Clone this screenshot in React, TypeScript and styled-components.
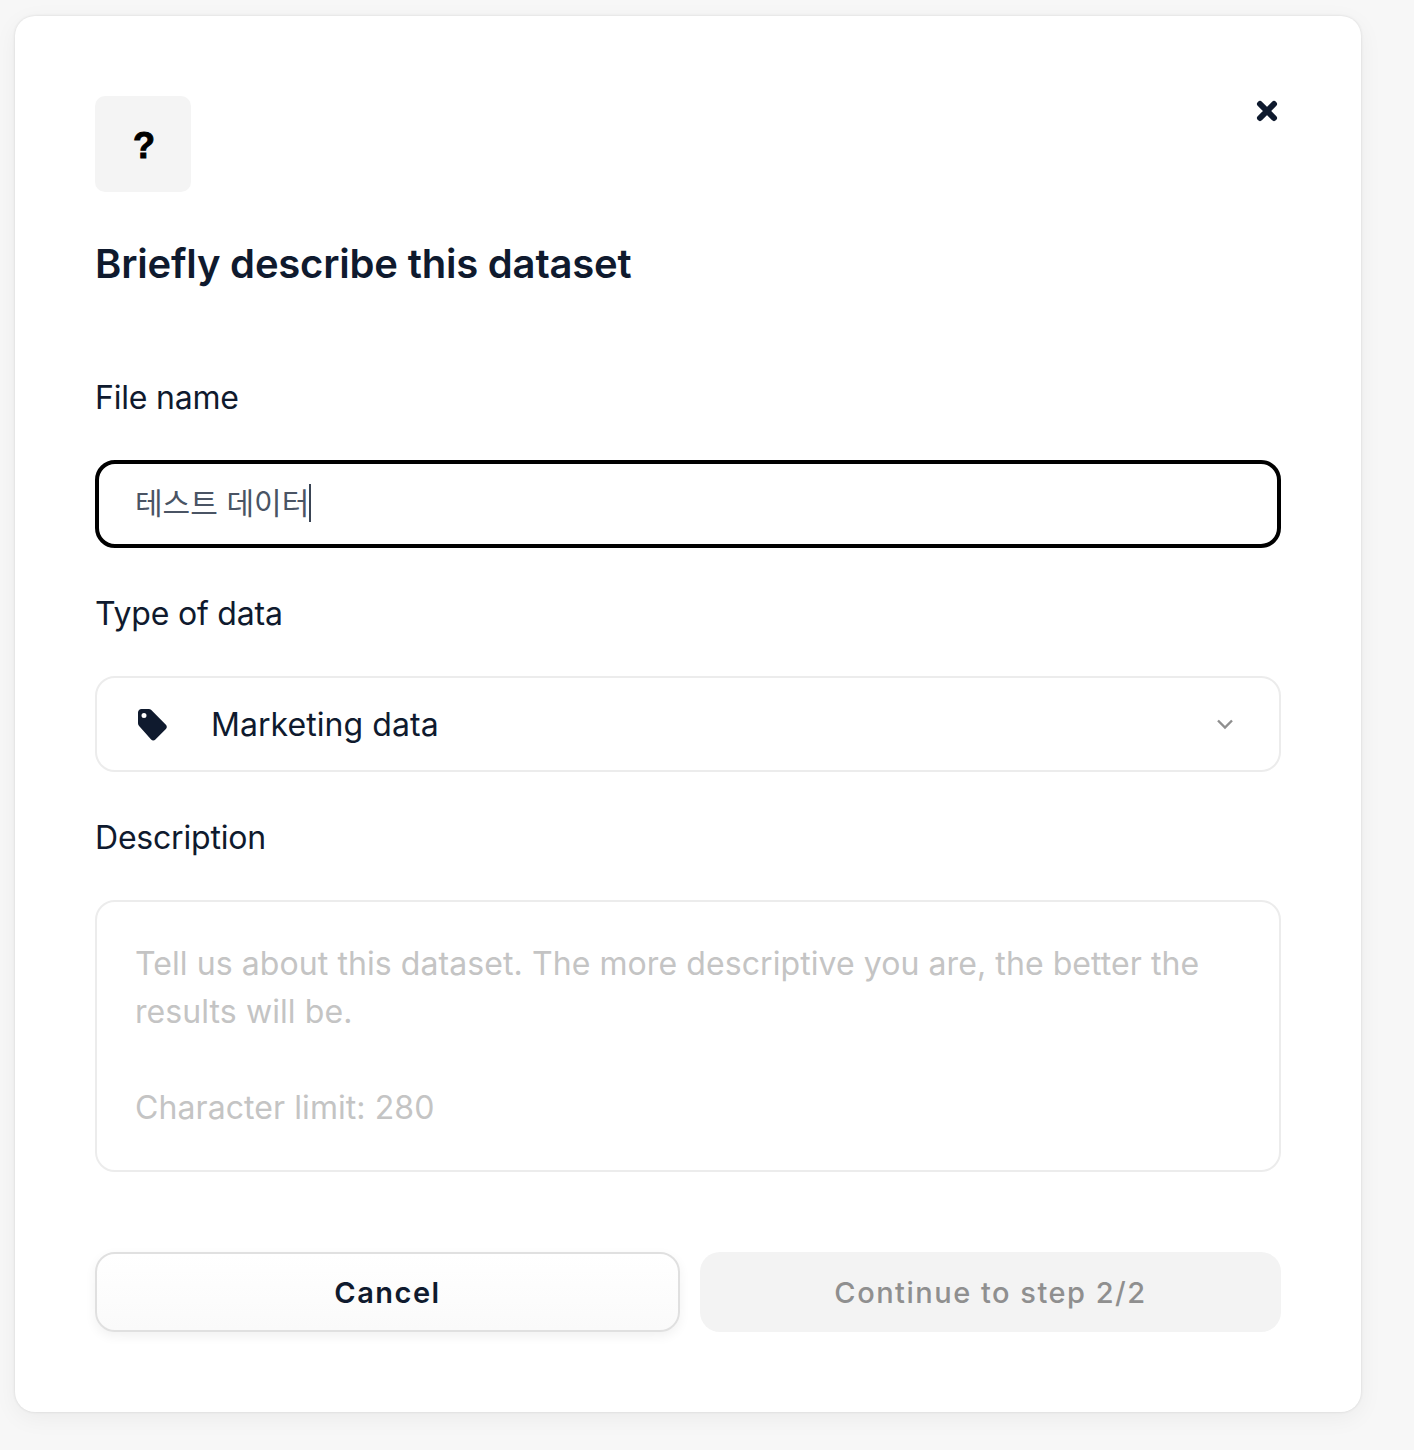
import styled, { createGlobalStyle } from 'styled-components';

const GlobalStyle = createGlobalStyle`
  html, body {
    margin: 0;
    padding: 0;
    background: #f7f7f7;
  }
  * {
    box-sizing: border-box;
  }
`;

const App = () => {
  return (
    <>
      <GlobalStyle />
      <Page>
        <Card>
          <Header>
            <IconBox>
              <QuestionGlyph>?</QuestionGlyph>
            </IconBox>
            <CloseButton aria-label="Close">
              <svg width="22" height="22" viewBox="0 0 22 22" fill="none">
                <path d="M4 4L18 18M18 4L4 18" stroke="#0f1a2e" strokeWidth="6" strokeLinecap="round" />
              </svg>
            </CloseButton>
          </Header>

          <Title>Briefly describe this dataset</Title>

          <FileLabel>File name</FileLabel>
          <NameInput>
            <NameValue>테스트 데이터</NameValue>
            <Caret />
          </NameInput>

          <TypeLabel>Type of data</TypeLabel>
          <SelectBox>
            <TagIcon width="34" height="34" viewBox="0 0 34 34">
              <path
                fillRule="evenodd"
                d="M3 5.5C3 3.6 4.6 2 6.5 2h7.2c1 0 1.9.4 2.6 1.1l14.6 14.6c1.2 1.2 1.2 3.100 0 4.300L20.400 32.500c-1.200 1.200-3.100 1.200-4.300 0L4.100 18.900C3.400 18.200 3 17.300 3 16.300V5.500zM9 6a2.500 2.500 0 1 0 0 5 2.500 2.500 0 0 0 0-5z"
                fill="#0f1a2e"
              />
            </TagIcon>
            <SelectValue>Marketing data</SelectValue>
            <Chevron width="18" height="12" viewBox="0 0 18 12" fill="none">
              <path d="M2 2.500L9 9.500L16 2.500" stroke="#8f8f8f" strokeWidth="2.400" />
            </Chevron>
          </SelectBox>

          <DescriptionLabel>Description</DescriptionLabel>
          <DescriptionBox>
            <Placeholder>Tell us about this dataset. The more descriptive you are, the better the results will be.</Placeholder>
            <Placeholder $gap>Character limit: 280</Placeholder>
          </DescriptionBox>

          <Actions>
            <CancelButton>Cancel</CancelButton>
            <ContinueButton disabled>Continue to step 2/2</ContinueButton>
          </Actions>
        </Card>
      </Page>
    </>
  );
};

export default App;

const Page = styled.div`
  width: 1414px;
  height: 1450px;
  padding: 16px 0 0 15px;
  overflow: hidden;
  background: #f7f7f7;
`;

const Card = styled.div`
  display: flex;
  flex-direction: column;
  width: 1346px;
  height: 1396px;
  padding: 80px;
  background: #fff;
  border-radius: 20px;
  box-shadow: 0 0 3px rgba(0, 0, 0, 0.12), 0 6px 24px rgba(0, 0, 0, 0.05);
  font-family: Inter, "Noto Sans CJK KR", sans-serif;
  color: #0f1a2e;
`;

const Header = styled.div`
  display: flex;
  justify-content: space-between;
  align-items: flex-start;
`;

const IconBox = styled.div`
  display: flex;
  align-items: center;
  justify-content: center;
  width: 96px;
  height: 96px;
  padding: 3px 0 0 2px;
  background: #f4f4f4;
  border-radius: 10px;
`;

const QuestionGlyph = styled.span`
  font-family: "Liberation Sans", sans-serif;
  font-size: 36px;
  font-weight: 900;
  line-height: 1;
  color: #000;
  -webkit-text-stroke: 1px #000;
`;

const CloseButton = styled.button`
  display: flex;
  padding: 0;
  margin: 4px 3px 0 0;
  border: none;
  background: none;
`;

const Title = styled.h1`
  margin: 48px 0 0;
  font-family: Inter, sans-serif;
  font-size: 40px;
  font-weight: 600;
  line-height: 48px;
  letter-spacing: -0.2px;
  color: #0f1a2e;
`;

const FieldLabel = styled.label`
  display: block;
  font-family: Inter, sans-serif;
  font-size: 32px;
  line-height: 40px;
  letter-spacing: -0.2px;
  color: #0f1a2e;
`;

const FileLabel = styled(FieldLabel)`
  margin-top: 90px;
`;

const TypeLabel = styled(FieldLabel)`
  margin-top: 46px;
`;

const DescriptionLabel = styled(FieldLabel)`
  margin-top: 46px;
`;

const NameInput = styled.div`
  display: flex;
  align-items: center;
  height: 88px;
  margin-top: 42px;
  padding: 0 36px 3px;
  border: 4px solid #000;
  border-radius: 20px;
`;

const NameValue = styled.span`
  margin-bottom: 4px;
  font-family: "Noto Sans CJK KR", sans-serif;
  font-size: 30px;
  font-weight: 400;
  word-spacing: 2px;
  color: #4a5464;
`;

const Caret = styled.span`
  width: 2px;
  height: 38px;
  background: #3a4454;
`;

const SelectBox = styled.div`
  display: flex;
  align-items: center;
  height: 96px;
  margin-top: 42px;
  padding: 0 45px 0 38px;
  border: 2px solid #ececec;
  border-radius: 20px;
`;

const TagIcon = styled.svg`
  flex: none;
`;

const SelectValue = styled.span`
  flex: 1;
  margin-left: 42px;
  font-size: 32px;
  letter-spacing: 0.06px;
  color: #0f1a2e;
`;

const Chevron = styled.svg`
  flex: none;
`;

const DescriptionBox = styled.div`
  height: 272px;
  margin-top: 42px;
  padding: 38px 38px 0;
  border: 2px solid #ececec;
  border-radius: 20px;
`;

const Placeholder = styled.p<{ $gap?: boolean }>`
  margin: ${({ $gap }) => ($gap ? '48px 0 0' : '0')};
  font-size: 32px;
  line-height: 48px;
  letter-spacing: 0.08px;
  color: #c4c4c4;
`;

const Actions = styled.div`
  display: grid;
  grid-template-columns: 585px 581px;
  justify-content: space-between;
  margin-top: 80px;
`;

const ActionButton = styled.button`
  height: 80px;
  border-radius: 20px;
  font-family: Inter, sans-serif;
  font-size: 29px;
  letter-spacing: 1.5px;
`;

const CancelButton = styled(ActionButton)`
  border: 2px solid #e0e0e0;
  background: linear-gradient(180deg, #ffffff 0%, #fafafa 100%);
  box-shadow: 0 4px 12px rgba(0, 0, 0, 0.06);
  font-weight: 600;
  color: #0f1a2e;
`;

const ContinueButton = styled(ActionButton)`
  border: none;
  background: #f3f3f3;
  font-weight: 500;
  color: #8f8f8f;
`;
